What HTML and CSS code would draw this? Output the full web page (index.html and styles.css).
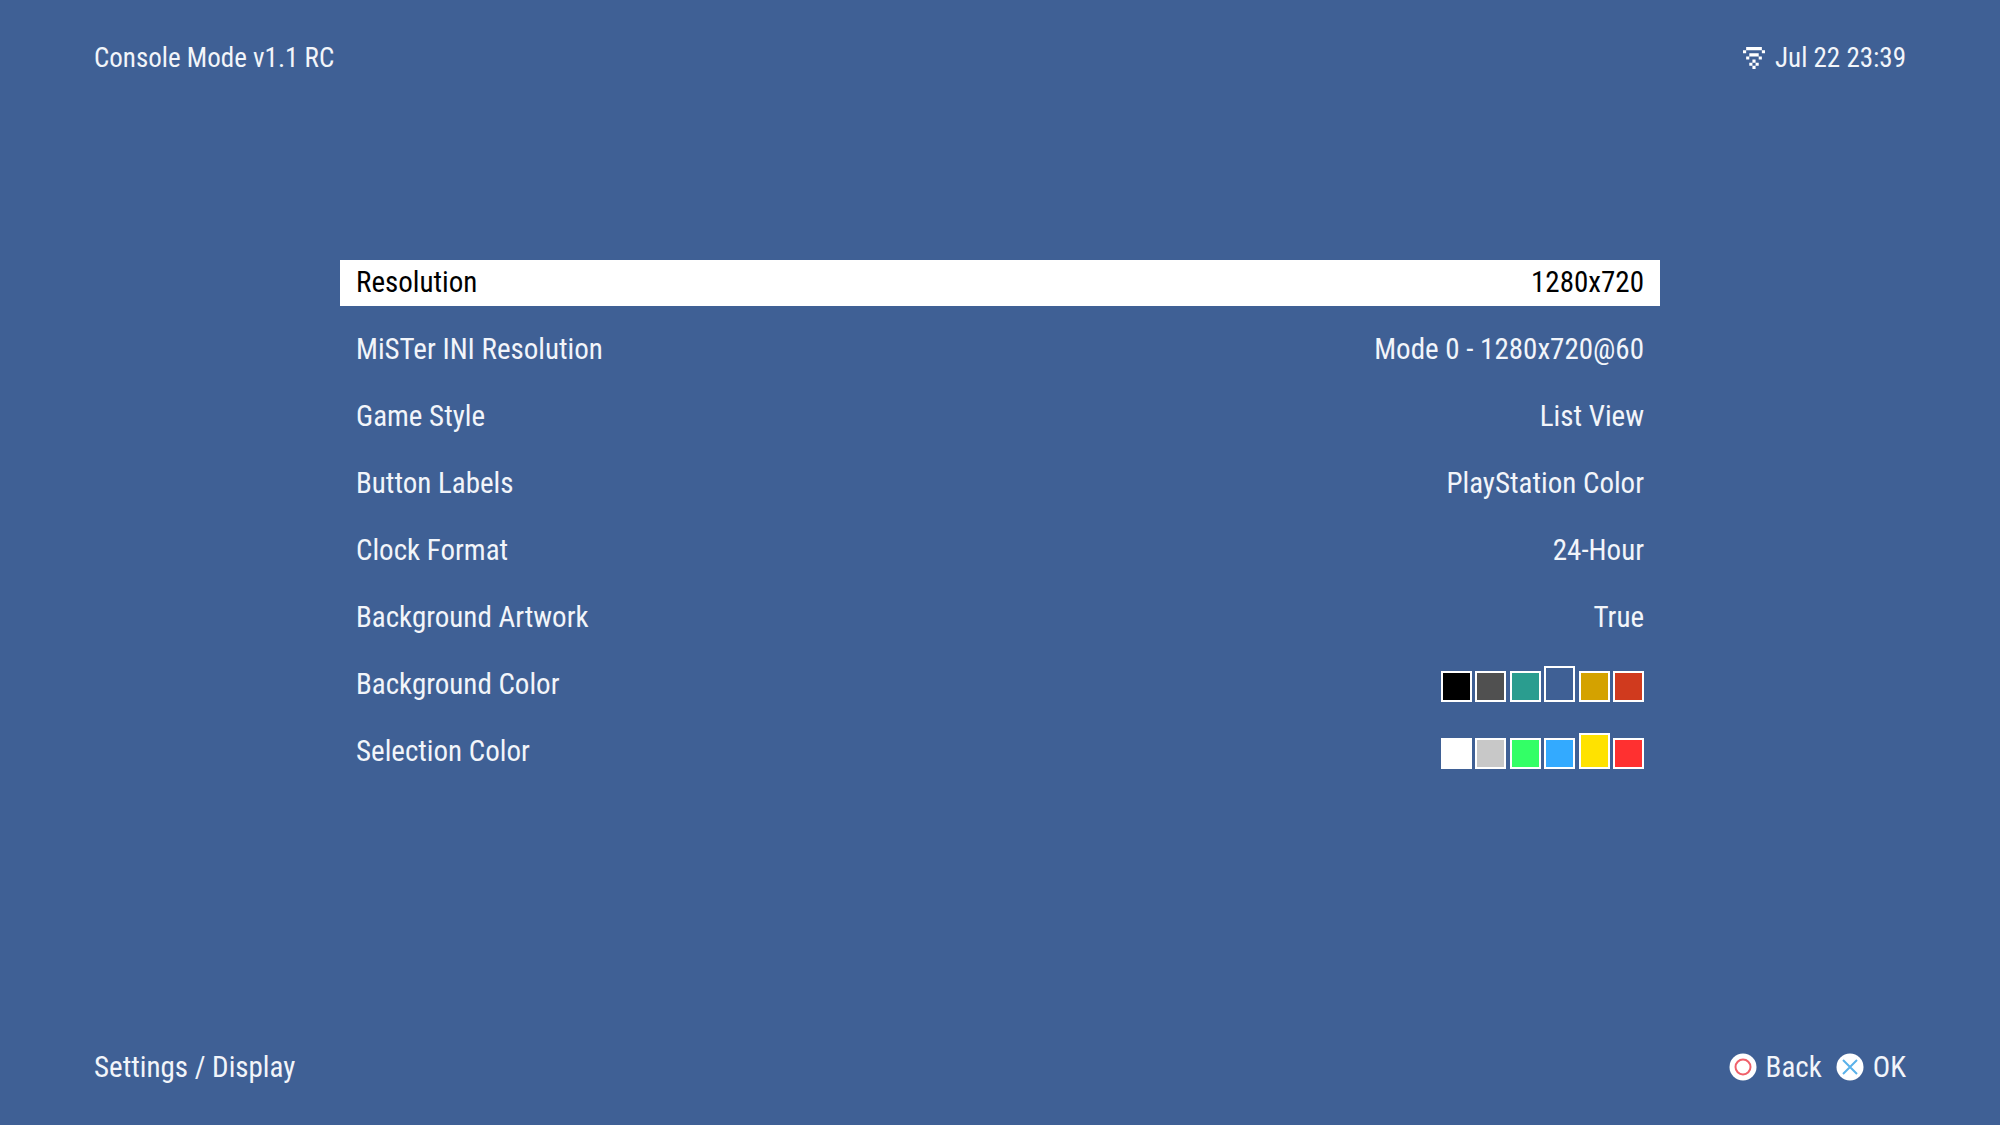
FILE: index.html
```html
<!DOCTYPE html>
<html lang="en">
<head>
    <meta charset="UTF-8">
    <title>Console Mode</title>
    <meta name="viewport" content="width=device-width, initial-scale=1.0">
    <link rel="stylesheet" href="styles.css">
</head>
<body>
<header class="bar">
    <h1 class="title">Console Mode v1.1 RC</h1>
    <div class="status">
        <svg class="wifi" viewBox="0 0 7 7" aria-hidden="true">
            <path d="M1 0h5v1H1zM0 1h1v1H0zM6 1h1v1H6zM2 2h3v1H2zM1 3h1v1H1zM5 3h1v1H5zM3 4h1v1H3zM2 5h1v1H2zM4 5h1v1H4zM3 6h1v1H3z"/>
        </svg>
        <time>Jul 22 23:39</time>
    </div>
</header>

<main class="menu">
    <button class="row selected" type="button"><span>Resolution</span><span>1280x720</span></button>
    <button class="row" type="button"><span>MiSTer INI Resolution</span><span>Mode 0 - 1280x720@60</span></button>
    <button class="row" type="button"><span>Game Style</span><span>List View</span></button>
    <button class="row" type="button"><span>Button Labels</span><span>PlayStation Color</span></button>
    <button class="row" type="button"><span>Clock Format</span><span>24-Hour</span></button>
    <button class="row" type="button"><span>Background Artwork</span><span>True</span></button>
    <div class="row" role="radiogroup" aria-labelledby="bg-label">
        <span id="bg-label">Background Color</span>
        <div class="swatches">
            <input class="swatch black" type="radio" name="bg" aria-label="Black">
            <input class="swatch gray" type="radio" name="bg" aria-label="Gray">
            <input class="swatch teal" type="radio" name="bg" aria-label="Teal">
            <input class="swatch navy" type="radio" name="bg" aria-label="Blue" checked>
            <input class="swatch gold" type="radio" name="bg" aria-label="Gold">
            <input class="swatch rust" type="radio" name="bg" aria-label="Red">
        </div>
    </div>
    <div class="row" role="radiogroup" aria-labelledby="sel-label">
        <span id="sel-label">Selection Color</span>
        <div class="swatches">
            <input class="swatch white" type="radio" name="sel" aria-label="White">
            <input class="swatch silver" type="radio" name="sel" aria-label="Silver">
            <input class="swatch green" type="radio" name="sel" aria-label="Green">
            <input class="swatch sky" type="radio" name="sel" aria-label="Blue">
            <input class="swatch yellow" type="radio" name="sel" aria-label="Yellow" checked>
            <input class="swatch red" type="radio" name="sel" aria-label="Red">
        </div>
    </div>
</main>

<footer class="bar">
    <div>Settings / Display</div>
    <div class="hints">
        <button class="hint" type="button">
            <svg class="pad" viewBox="0 0 28 28" aria-hidden="true">
                <circle cx="14" cy="14" r="13.5" fill="#fff"/>
                <circle cx="14" cy="14" r="7.5" fill="none" stroke="#f0606a" stroke-width="2"/>
            </svg>
            Back
        </button>
        <button class="hint" type="button">
            <svg class="pad" viewBox="0 0 28 28" aria-hidden="true">
                <circle cx="14" cy="14" r="13.5" fill="#fff"/>
                <path d="M7 7l14 14M21 7L7 21" fill="none" stroke="#5ab2ea" stroke-width="2"/>
            </svg>
            OK
        </button>
    </div>
</footer>
</body>
</html>
```
FILE: styles.css
```css
* {
    box-sizing: border-box;
}

body {
    margin: 0;
    min-height: 100vh;
    display: flex;
    flex-direction: column;
    background: #3f6095;
    color: #f2f5fa;
    font-family: "Roboto Condensed", "Liberation Sans Narrow", "DejaVu Sans Condensed", sans-serif;
    font-size: 29px;
    line-height: 34px;
}

button {
    border: 0;
    padding: 0;
    background: none;
    color: inherit;
    font: inherit;
    cursor: pointer;
}

.bar {
    display: flex;
    justify-content: space-between;
    padding: 41px 94px;
}

.title {
    margin: 0;
    font-size: 27px;
    font-weight: normal;
}

.status {
    display: flex;
    align-items: center;
    gap: 10px;
    font-size: 27px;
}

.wifi {
    width: 22px;
    height: 22px;
    fill: #fff;
}

/* menu */
.menu {
    flex: 1;
    display: flex;
    flex-direction: column;
    gap: 21px;
    width: 66%;
    margin: 0 auto;
    padding-top: 144px;
}

.row {
    display: flex;
    justify-content: space-between;
    align-items: center;
    height: 46px;
    padding: 0 16px 2px;
}

.row.selected {
    background: #fff;
    color: #000;
}

.swatches {
    display: flex;
    justify-content: space-between;
    align-items: flex-end;
    width: 203px;
    height: 36px;
}

.swatch {
    appearance: none;
    margin: 0;
    width: 31px;
    height: 31px;
    border: 2px solid #fff;
    cursor: pointer;
}

.swatch:checked {
    height: 36px;
}

.black { background: #000; }
.gray { background: #505050; }
.teal { background: #2a9d8f; }
.navy { background: #3f6095; }
.gold { background: #d4a200; }
.rust { background: #d03a1e; }
.white { background: #fff; }
.silver { background: #c8c8c8; }
.green { background: #33ff66; }
.sky { background: #33aaff; }
.yellow { background: #ffe200; }
.red { background: #ff3030; }

/* button hints */
.hints {
    display: flex;
    gap: 14px;
}

.hint {
    display: flex;
    align-items: center;
    gap: 9px;
}

.pad {
    width: 28px;
    height: 28px;
}
```
